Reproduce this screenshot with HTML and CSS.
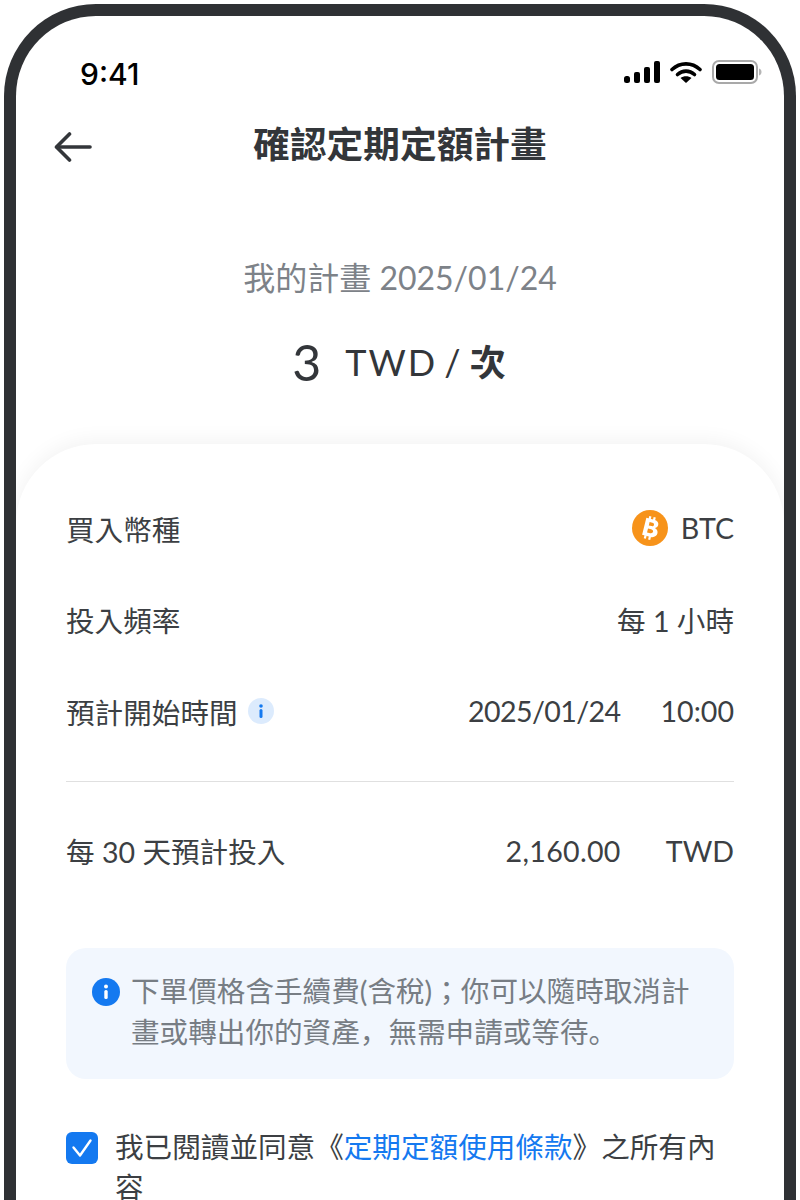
FILE: index.html
```html
<!DOCTYPE html>
<html lang="zh-Hant">
<head>
    <meta charset="UTF-8">
    <meta name="viewport" content="width=device-width, initial-scale=1.0">
    <title>確認定期定額計畫</title>
    <link rel="stylesheet" href="styles.css">
</head>
<body>

    <div class="phone">
        <div class="status-bar">
            <span class="time">9:41</span>
            <div class="status-icons">
                <svg width="36" height="22" viewBox="0 0 36 22" fill="#000">
                    <rect x="0" y="15" width="6" height="7" rx="2.5"/>
                    <rect x="10" y="11" width="6" height="11" rx="2"/>
                    <rect x="20" y="6" width="6" height="16" rx="2"/>
                    <rect x="30" y="0" width="6" height="22" rx="2"/>
                </svg>
                <svg width="32" height="22" viewBox="0 0 32 22">
                    <path d="M2 8.5C10 1 22 1 30 8.5" fill="none" stroke="#000" stroke-width="3.6" stroke-linecap="round"/>
                    <path d="M7.5 13.5C12.5 9 19.5 9 24.5 13.5" fill="none" stroke="#000" stroke-width="3.6" stroke-linecap="round"/>
                    <path d="M10.5 17 16 22 21.5 17C18.5 14.5 13.5 14.5 10.5 17Z" fill="#000"/>
                </svg>
                <svg width="50" height="24" viewBox="0 0 50 24">
                    <rect x="1" y="1" width="44" height="22" rx="6" fill="none" stroke="#a9a9a9" stroke-width="2"/>
                    <rect x="4" y="4" width="38" height="16" rx="3.5" fill="#000"/>
                    <path d="M47 8.5c1.6.5 2.5 1.8 2.5 3.5s-.9 3-2.5 3.5z" fill="#b5b5b5"/>
                </svg>
            </div>
        </div>

        <div class="nav-bar">
            <svg class="back" width="38" height="30" viewBox="0 0 38 30" fill="none" stroke="#33363a" stroke-width="3.6" stroke-linecap="round" stroke-linejoin="round">
                <path d="M36 15H3"/>
                <path d="M15.5 2 2.5 15l13 13"/>
            </svg>
            <h1>確認定期定額計畫</h1>
        </div>

        <div class="plan">
            <p class="plan-date">我的計畫 2025/01/24</p>
            <p class="plan-amount"><span class="num">3</span><span class="unit">TWD / <b>次</b></span></p>
        </div>

        <div class="card">
            <div class="row">
                <span>買入幣種</span>
                <span class="coin">
                    <svg width="36" height="36" viewBox="0 0 36 36">
                        <circle cx="18" cy="18" r="18" fill="#f7931a"/>
                        <g transform="rotate(14 18 18)">
                            <path d="M12 9h8c3.2 0 5.3 1.7 5.3 4.2 0 1.8-1 3.1-2.6 3.7 2.3.5 3.8 2.2 3.8 4.4 0 3.1-2.4 5.2-5.8 5.2H12zM16.2 12.3v3.5h2.8c1.3 0 2.1-.7 2.1-1.75s-.8-1.75-2.1-1.75zM16.2 19v4h3.2c1.5 0 2.500-.8 2.500-2s-1-2-2.500-2z" fill="#fff" fill-rule="evenodd"/>
                            <path d="M15.5 6.5v3M20 6.5v3M15.5 26v3.5M20 26v3.5" stroke="#fff" stroke-width="2.2"/>
                        </g>
                    </svg>
                    BTC
                </span>
            </div>
            <div class="row">
                <span>投入頻率</span>
                <span>每 1 小時</span>
            </div>
            <div class="row">
                <span class="with-icon">預計開始時間
                    <svg width="26" height="26" viewBox="0 0 26 26">
                        <circle cx="13" cy="13" r="13" fill="#dcebfd"/>
                        <circle cx="13" cy="8" r="1.8" fill="#1479f0"/>
                        <rect x="11.5" y="11" width="3" height="9" rx="1.5" fill="#1479f0"/>
                    </svg>
                </span>
                <span class="pair"><span class="date">2025/01/24</span><span>10:00</span></span>
            </div>

            <hr class="divider">

            <div class="row">
                <span>每 30 天預計投入</span>
                <span class="pair pair-wide"><span class="money">2,160.00</span><span>TWD</span></span>
            </div>

            <div class="notice">
                <svg width="28" height="28" viewBox="0 0 28 28">
                    <circle cx="14" cy="14" r="14" fill="#1479f0"/>
                    <circle cx="14" cy="8.5" r="2" fill="#fff"/>
                    <rect x="12.3" y="12" width="3.4" height="9" rx="1.5" fill="#fff"/>
                </svg>
                <p>下單價格含手續費(含稅)；你可以隨時取消計畫或轉出你的資產<span class="punct" lang="ja">，</span>無需申請或等待<span class="punct" lang="ja">。</span></p>
            </div>

            <div class="agree">
                <span class="checkbox">
                    <svg width="22" height="20" viewBox="0 0 22 20" fill="none" stroke="#fff" stroke-width="2.4" stroke-linecap="round" stroke-linejoin="round">
                        <path d="M2.5 9.5 9 17.5 19.5 2.5"/>
                    </svg>
                </span>
                <p>我已閱讀並同意《<a href="#">定期定額使用條款</a>》之所有內容</p>
            </div>
        </div>
    </div>

</body>
</html>
```

FILE: styles.css
```css
body {
    font-family: "Lato", "Noto Sans CJK TC", sans-serif;
    margin: 0;
    padding: 0;
    background-color: #fff;
    height: 1200px;
    overflow: hidden;
}

p {
    margin: 0;
}

.phone {
    box-sizing: border-box;
    height: 1196px;
    margin: 4px 4px 0;
    border: 12px solid #2f3134;
    border-bottom: 0;
    border-radius: 92px 92px 0 0;
    background-color: #fff;
    color: #3c3f43;
    overflow: hidden;
}

/* Status bar */
.status-bar {
    display: flex;
    justify-content: space-between;
    align-items: center;
    height: 34px;
    padding: 41px 22px 0 64px;
}

.time {
    font-family: "Inter", sans-serif;
    font-size: 30px;
    font-weight: 500;
    color: #000;
}

.status-icons {
    display: flex;
    align-items: center;
    gap: 10px;
    margin-top: -4px;
}

/* Nav */
.nav-bar {
    position: relative;
    margin-top: 26px;
    text-align: center;
}

.back {
    position: absolute;
    left: 38px;
    top: 15px;
}

h1 {
    margin: 0;
    font-size: 36.7px;
    line-height: 54px;
    font-weight: 700;
    color: #33363a;
}

/* Plan header */
.plan {
    margin-top: 84px;
    text-align: center;
}

.plan-date {
    font-size: 32px;
    line-height: 46px;
    color: #7d8288;
}

.plan-amount {
    display: flex;
    justify-content: center;
    align-items: center;
    gap: 24px;
    margin-top: 34px;
    line-height: 54px;
    font-size: 36px;
    color: #33363a;
}

.plan-amount .num {
    font-size: 50px;
}

.plan-amount .unit {
    letter-spacing: 2px;
    word-spacing: -4px;
}

.plan-amount b {
    font-weight: 700;
}

/* Card */
.card {
    margin-top: 55px;
    padding: 61px 50px 0;
    border-radius: 80px 80px 0 0;
    background-color: #fff;
    box-shadow: 0 -4px 20px rgba(0, 0, 0, 0.05);
    font-size: 28.6px;
}

.row {
    display: flex;
    justify-content: space-between;
    align-items: center;
    height: 46px;
    margin-bottom: 45.5px;
}

.coin {
    display: flex;
    align-items: center;
    gap: 13px;
}

.with-icon {
    display: flex;
    align-items: center;
    gap: 10px;
}

.pair {
    display: flex;
    gap: 40px;
}

.pair .date {
    letter-spacing: -0.6px;
}

.pair-wide {
    gap: 45px;
}

.pair .money {
    letter-spacing: 0.3px;
}

.divider {
    margin: 46.5px 0 46px;
    border: 0;
    border-top: 1px solid #e0e0e0;
}

.notice {
    display: flex;
    gap: 11px;
    margin-top: 74px;
    padding: 23px 26px 27px;
    border-radius: 20px;
    background-color: #f2f7fe;
    line-height: 40px;
    color: #777d84;
}

.notice svg {
    flex: none;
    margin-top: 7px;
}

.punct {
    font-family: "Noto Sans CJK JP", sans-serif;
}

.agree {
    display: flex;
    gap: 17px;
    margin-top: 48px;
    line-height: 40px;
}

.checkbox {
    flex: none;
    display: flex;
    justify-content: center;
    align-items: center;
    width: 32px;
    height: 32px;
    margin-top: 5px;
    border-radius: 6px;
    background-color: #1479f0;
}

.agree a {
    color: #1479f0;
    text-decoration: none;
}
```
